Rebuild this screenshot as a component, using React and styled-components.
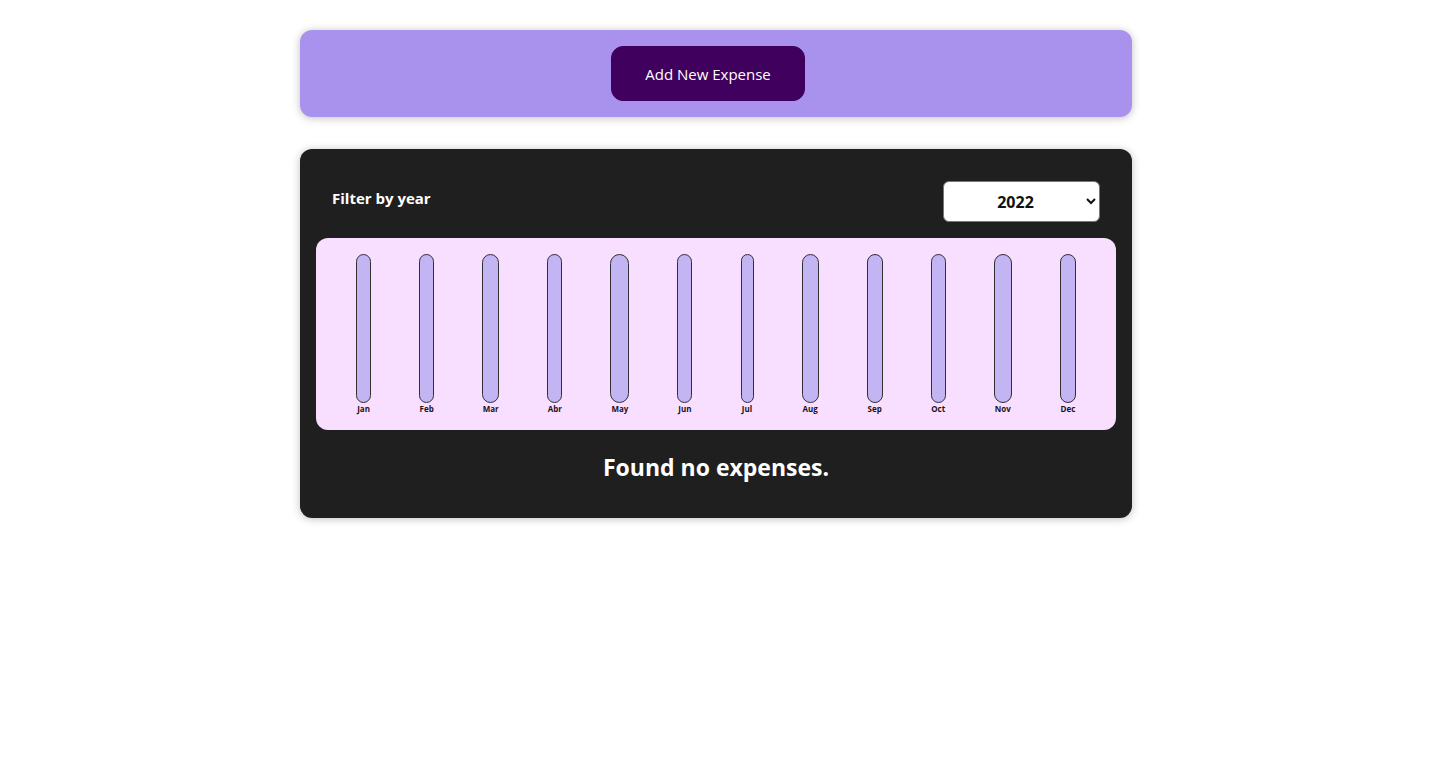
import React, { useState } from "react";
import styled, { createGlobalStyle } from "styled-components";

const GlobalStyle = createGlobalStyle`
  *, *::before, *::after { box-sizing: border-box; }
  body {
    margin: 0;
    background: #ffffff;
    font-family: "Open Sans", "Noto Sans", sans-serif;
  }
`;

const Page = styled.main`
  display: flex;
  flex-direction: column;
  align-items: center;
  gap: 32px;
  padding: 30px 17px 30px 16px;
`;

const Card = styled.section`
  width: 100%;
  max-width: 832px;
  padding: 16px;
  border-radius: 12px;
  box-shadow: 0 1px 8px rgba(0, 0, 0, 0.25);
`;

const NewExpense = styled(Card)`
  background: #a892ee;
  text-align: center;
`;

const AddButton = styled.button`
  display: inline-block;
  vertical-align: top;
  min-width: 194px;
  margin-right: 16px;
  padding: 17px 32px 15px;
  border: 1px solid #40005d;
  border-radius: 12px;
  background: #40005d;
  color: #ffffff;
  font: inherit;
  font-size: 15px;
  line-height: 21px;
  white-space: nowrap;
  cursor: pointer;
`;

const Expenses = styled(Card)`
  background: #1f1f1f;
`;

const FilterBar = styled.div`
  display: flex;
  align-items: flex-start;
  justify-content: space-between;
  padding: 16px;
  color: #ffffff;
`;

const FilterLabel = styled.label`
  font-size: 15px;
  font-weight: 700;
  line-height: 34px;
`;

const YearSelect = styled.select`
  width: 157px;
  height: 41px;
  border: 1px solid #767676;
  border-radius: 6px;
  background: #ffffff;
  color: #111111;
  font: inherit;
  font-size: 16px;
  font-weight: 700;
  text-align: center;
`;

const Chart = styled.div`
  display: flex;
  justify-content: space-around;
  height: 192px;
  padding: 16px;
  border-radius: 12px;
  background: #f8dfff;
`;

const Month = styled.div`
  display: flex;
  flex-direction: column;
  align-items: center;
  width: ${(p) => p.$width}px;
`;

const Bar = styled.div`
  flex: none;
  width: 100%;
  height: 149px;
  border: 1px solid #313131;
  border-radius: 12px;
  background: #c3b4f3;
`;

const MonthLabel = styled.span`
  font-size: 8px;
  font-weight: 700;
  line-height: 12px;
  color: #1b1020;
  white-space: nowrap;
`;

const Fallback = styled.h2`
  margin: 20px 0 18px;
  color: #ffffff;
  font-size: 23px;
  font-weight: 700;
  line-height: 34px;
  text-align: center;
`;

const MONTHS = [
  { label: "Jan", width: 15 },
  { label: "Feb", width: 15 },
  { label: "Mar", width: 17 },
  { label: "Abr", width: 15 },
  { label: "May", width: 19 },
  { label: "Jun", width: 15 },
  { label: "Jul", width: 13 },
  { label: "Aug", width: 17 },
  { label: "Sep", width: 16 },
  { label: "Oct", width: 15 },
  { label: "Nov", width: 18 },
  { label: "Dec", width: 16 },
];

const YEARS = ["2022", "2021", "2020", "2019"];

export default function App() {
  const [year, setYear] = useState("2022");

  return (
    <>
      <GlobalStyle />
      <Page>
        <NewExpense>
          <AddButton type="button">Add New Expense</AddButton>
        </NewExpense>
        <Expenses>
          <FilterBar>
            <FilterLabel htmlFor="year">Filter by year</FilterLabel>
            <YearSelect id="year" value={year} onChange={(e) => setYear(e.target.value)}>
              {YEARS.map((y) => (
                <option key={y} value={y}>{y}</option>
              ))}
            </YearSelect>
          </FilterBar>
          <Chart>
            {MONTHS.map((m) => (
              <Month key={m.label} $width={m.width}>
                <Bar />
                <MonthLabel>{m.label}</MonthLabel>
              </Month>
            ))}
          </Chart>
          <Fallback>Found no expenses.</Fallback>
        </Expenses>
      </Page>
    </>
  );
}
